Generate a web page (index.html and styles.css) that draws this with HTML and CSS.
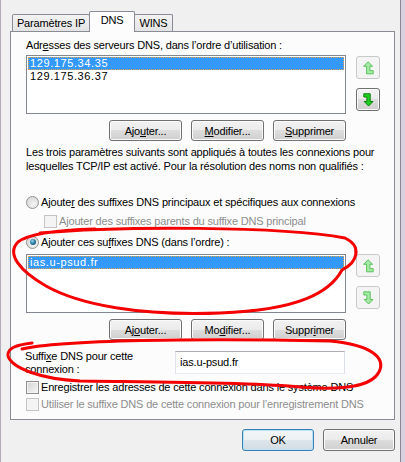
FILE: index.html
```html
<!DOCTYPE html>
<html>
<head>
<meta charset="utf-8">
<link rel="stylesheet" href="styles.css">
</head>
<body>
<div class="window">
  <div class="tabs">
    <div class="tab t1">Paramètres IP</div>
    <div class="tab active">DNS</div>
    <div class="tab t3">WINS</div>
  </div>
  <div class="panel">
    <div class="label">Adr<u>e</u>sses des serveurs DNS, dans l’ordre d’utilisation :</div>
    <div class="listrow">
      <div class="listbox">
        <div class="item sel">129.175.34.35</div>
        <div class="item">129.175.36.37</div>
      </div>
      <div class="arrows">
        <div class="arrow light"><svg width="11" height="14" viewBox="0 0 11 14"><path class="ap" d="M5 0.8 L9.6 5.3 L6.9 5.3 L6.9 9.6 L10.2 9.6 L10.2 12.8 L3.6 12.8 L3.6 5.3 L0.6 5.3 Z"/></svg></div>
        <div class="arrow on"><svg width="11" height="14" viewBox="0 0 11 14"><path class="ap" d="M0.8 0.8 L7.2 0.8 L7.2 8.5 L10 8.5 L5.6 13 L1.2 8.5 L3.9 8.5 L3.9 4 L0.8 4 Z"/></svg></div>
      </div>
    </div>
    <div class="btnrow">
      <button class="btn">Ajo<u>u</u>ter...</button>
      <button class="btn"><u>M</u>odifier...</button>
      <button class="btn"><u>S</u>upprimer</button>
    </div>
    <p class="para">Les trois paramètres suivants sont appliqués à toutes les connexions pour<br>lesquelles TCP/IP est activé. Pour la résolution des noms non qualifiés :</p>
    <div class="opt r1"><span class="radio"></span><span>Ajoute<u>r</u> des suffixes DNS principaux et spécifiques aux connexions</span></div>
    <div class="opt c1 indent disabled"><span class="check dis"></span><span>Ajouter des suffixes parents du suffixe DNS principal</span></div>
    <div class="opt r2"><span class="radio on"></span><span>Ajouter ces su<u>f</u>fixes DNS (dans l’ordre) :</span></div>
    <div class="listrow list2">
      <div class="listbox">
        <div class="item sel">ias.u-psud.fr</div>
      </div>
      <div class="arrows a2">
        <div class="arrow light"><svg width="11" height="14" viewBox="0 0 11 14"><path class="ap" d="M5 0.8 L9.6 5.3 L6.9 5.3 L6.9 9.6 L10.2 9.6 L10.2 12.8 L3.6 12.8 L3.6 5.3 L0.6 5.3 Z"/></svg></div>
        <div class="arrow light"><svg width="11" height="14" viewBox="0 0 11 14"><path class="ap" d="M0.8 0.8 L7.2 0.8 L7.2 8.5 L10 8.5 L5.6 13 L1.2 8.5 L3.9 8.5 L3.9 4 L0.8 4 Z"/></svg></div>
      </div>
    </div>
    <div class="btnrow">
      <button class="btn">Aj<u>o</u>uter...</button>
      <button class="btn">Mo<u>d</u>ifier...</button>
      <button class="btn">Suppr<u>i</u>mer</button>
    </div>
    <div class="suffix">
      <div class="slabel">Suffi<u>x</u>e DNS pour cette<br>connexion :</div>
      <div class="textbox">ias.u-psud.fr</div>
    </div>
    <div class="opt c2"><span class="check"></span><span>Enregistrer les adresses de cette connexion dans le système DNS</span></div>
    <div class="opt c3 disabled"><span class="check dis"></span><span>Utiliser le suffixe DNS de cette connexion pour l’enregistrement DNS</span></div>
  </div>
  <div class="footer">
    <button class="btn big default">OK</button>
    <button class="btn big">Annuler</button>
  </div>
  <svg class="marks" width="405" height="462" viewBox="0 0 405 462">
    <path d="M40 233 C120 226, 280 226, 345 238 C362 246, 358 262, 342 270 C330 292, 300 310, 220 313 C140 316, 80 305, 46 286 C20 271, 6 254, 18 242 C28 234, 60 230, 95 229"/>
    <path d="M22 349 C60 340, 200 338, 330 341 C372 345, 386 358, 379 372 C372 385, 350 391, 300 387 C250 382, 150 382, 80 381 C40 379, 12 368, 8 356 C7 348, 16 345, 32 343"/>
  </svg>
</div>
</body>
</html>
```

FILE: styles.css
```css
body {
  margin: 0;
  width: 405px;
  height: 462px;
  overflow: hidden;
  background: #d8d0de;
  font-family: "Liberation Sans", Arial, sans-serif;
  font-size: 11px;
  letter-spacing: -0.17px;
  color: #000;
}

.window {
  position: relative;
  box-sizing: border-box;
  width: 401px;
  height: 462px;
  background: #f0f0f0;
  border-left: 1px solid #b3aabb;
  border-right: 1px solid #8e8599;
  padding: 11px 0 0 9px;
}

.tabs {
  display: flex;
  align-items: flex-start;
  height: 21px;
  margin-left: 2px;
  margin-bottom: -1px;
  position: relative;
  z-index: 1;
}

.tab {
  box-sizing: border-box;
  height: 17px;
  margin-top: 3px;
  border: 1px solid #898c95;
  border-bottom: none;
  border-radius: 2px 2px 0 0;
  background: linear-gradient(#f3f3f3, #e4e4e4);
  line-height: 16px;
  text-align: center;
}

.t1 { width: 78px; }
.t3 { width: 39px; margin-left: -1px; }

.tab.active {
  width: 46px;
  height: 21px;
  margin-top: 0;
  margin-left: -1px;
  background: #fcfcfc;
  line-height: 17px;
}

.panel {
  box-sizing: border-box;
  width: 385px;
  border: 1px solid #898c95;
  background: #fcfcfc;
  padding: 6px 13px 8px 15px;
  white-space: nowrap;
}

.label {
  line-height: 14px;
  height: 14px;
}

.listrow {
  display: flex;
  gap: 10px;
  margin-top: 3px;
}

.list2 { margin-top: 5px; }

.listbox {
  box-sizing: border-box;
  width: 320px;
  height: 59px;
  border: 1px solid #828790;
  background: #fff;
  padding: 1px;
}

.item {
  height: 13px;
  line-height: 13px;
  padding-left: 2px;
  letter-spacing: 0.6px;
}

.item.sel {
  box-sizing: border-box;
  background: #3399ff;
  color: #fff;
  outline: 1px dotted #e8a050;
  outline-offset: -1px;
}

.arrows {
  display: flex;
  flex-direction: column;
  gap: 9px;
  margin-top: 1px;
}

.a2 { margin-top: 0; }

.arrow {
  box-sizing: border-box;
  width: 24px;
  height: 23px;
  border-radius: 3px;
  display: flex;
  align-items: center;
  justify-content: center;
}

.arrow.light {
  border: 1px solid #c9c9c9;
  background: #f4f4f4;
}

.arrow.light .ap {
  fill: #a6e8a6;
  stroke: #5cc45c;
  stroke-width: 1;
}

.arrow.on {
  border: 1px solid #707070;
  background: linear-gradient(#f2f2f2 0%, #ebebeb 50%, #dddddd 50%, #cfcfcf 100%);
  box-shadow: inset 0 0 0 1px #fafafa;
}

.arrow.on .ap {
  fill: #20d020;
  stroke: #0b7d0b;
  stroke-width: 1;
}

.btnrow {
  display: flex;
  justify-content: flex-end;
  gap: 9px;
  width: 320px;
  margin-top: 6px;
}

.btn {
  box-sizing: border-box;
  width: 73px;
  height: 21px;
  padding: 0;
  border: 1px solid #707070;
  border-radius: 3px;
  background: linear-gradient(#f2f2f2 0%, #ebebeb 50%, #dddddd 50%, #cfcfcf 100%);
  box-shadow: inset 0 0 0 1px #fbfbfb;
  font-family: "Liberation Sans", Arial, sans-serif;
  font-size: 11px;
  letter-spacing: -0.17px;
  color: #000;
}

.para {
  margin: 4px 0 0;
  line-height: 14px;
}

.opt {
  display: flex;
  align-items: center;
  height: 14px;
  line-height: 14px;
}

.r1 { margin-top: 22px; }
.c1 { margin-top: 5px; }
.r2 { margin-top: 7px; }
.c2 { margin-top: 4px; }
.c3 { margin-top: 3px; }

.indent { padding-left: 18px; }

.disabled { color: #8d8d8d; }

.radio {
  box-sizing: border-box;
  flex: none;
  width: 13px;
  height: 13px;
  margin-right: 2px;
  border-radius: 50%;
  border: 1px solid #939393;
  background: radial-gradient(circle at 60% 65%, #f4f4f4 0%, #dcdcdc 70%, #cfcfcf 100%);
  display: flex;
  align-items: center;
  justify-content: center;
}

.radio.on::after {
  content: "";
  width: 6px;
  height: 6px;
  border-radius: 50%;
  background: radial-gradient(circle at 40% 35%, #9fd6ef 0%, #2b7fa8 45%, #0d3a55 100%);
}

.check {
  box-sizing: border-box;
  flex: none;
  width: 13px;
  height: 13px;
  margin-right: 2px;
  border: 1px solid #8e8f8f;
  background: linear-gradient(135deg, #d4d4d4, #f6f6f6);
  box-shadow: inset 0 0 0 1px #f4f4f4;
}

.check.dis {
  border-color: #c4c4c4;
  background: #f4f4f4;
}

.suffix {
  display: flex;
  margin-top: 10px;
}

.slabel {
  width: 150px;
  line-height: 13px;
  margin-left: -1px;
}

.textbox {
  box-sizing: border-box;
  width: 170px;
  height: 23px;
  margin-top: 1px;
  border: 1px solid #abadb3;
  border-left-color: #e2e3ea;
  border-right-color: #dbdfe6;
  border-bottom-color: #e3e9ef;
  background: #fff;
  line-height: 21px;
  padding-left: 4px;
}

.footer {
  display: flex;
  justify-content: flex-end;
  gap: 9px;
  width: 385px;
  margin-top: 9px;
}

.btn.big {
  width: 72px;
  height: 22px;
}

.btn.default {
  border-color: #3c7fb1;
  box-shadow: inset 0 0 0 1px #b8e2f8;
  background: linear-gradient(#f2f6f8 0%, #ecf1f4 50%, #dde6eb 50%, #d2dde3 100%);
}

.marks {
  position: absolute;
  left: -1px;
  top: 0;
  pointer-events: none;
}

.marks path {
  fill: none;
  stroke: #f40000;
  stroke-width: 3;
  stroke-linecap: round;
  stroke-linejoin: round;
}
```
